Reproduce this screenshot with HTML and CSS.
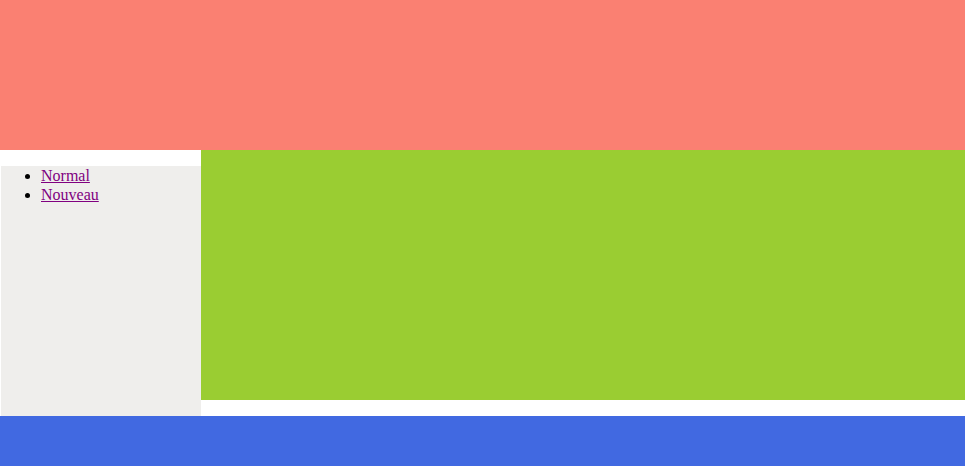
FILE: index.html
```html
<!DOCTYPE html>
<html>
<head>
<meta charset="utf-8">
<link rel="stylesheet" href="styles.css">
</head>
<body>
<header class="top"></header>
<div class="middle">
  <nav class="side">
    <ul class="menu">
      <li><a href="#" class="link">Normal</a></li>
      <li><a href="#" class="link">Nouveau</a></li>
    </ul>
  </nav>
  <main class="content"></main>
</div>
<footer class="bottom"></footer>
</body>
</html>
```
FILE: styles.css
```css
html, body {
  margin: 0;
  padding: 0;
  background: #ffffff;
  font-family: "Liberation Serif", "Times New Roman", serif;
  font-size: 16px;
}
.top {
  height: 150px;
  background: #fa8072;
}
.middle {
  display: flex;
  align-items: flex-start;
}
.side {
  width: 200px;
  height: 250px;
  margin-left: 1px;
  margin-top: 16px;
  background: #efeeec;
}
.menu {
  margin: 0;
  padding: 0 0 0 40px;
  line-height: 19px;
}
.link {
  color: #800080;
}
.content {
  flex: 1;
  height: 250px;
  background: #9acd32;
}
.bottom {
  height: 50px;
  background: #4169e1;
}
```
